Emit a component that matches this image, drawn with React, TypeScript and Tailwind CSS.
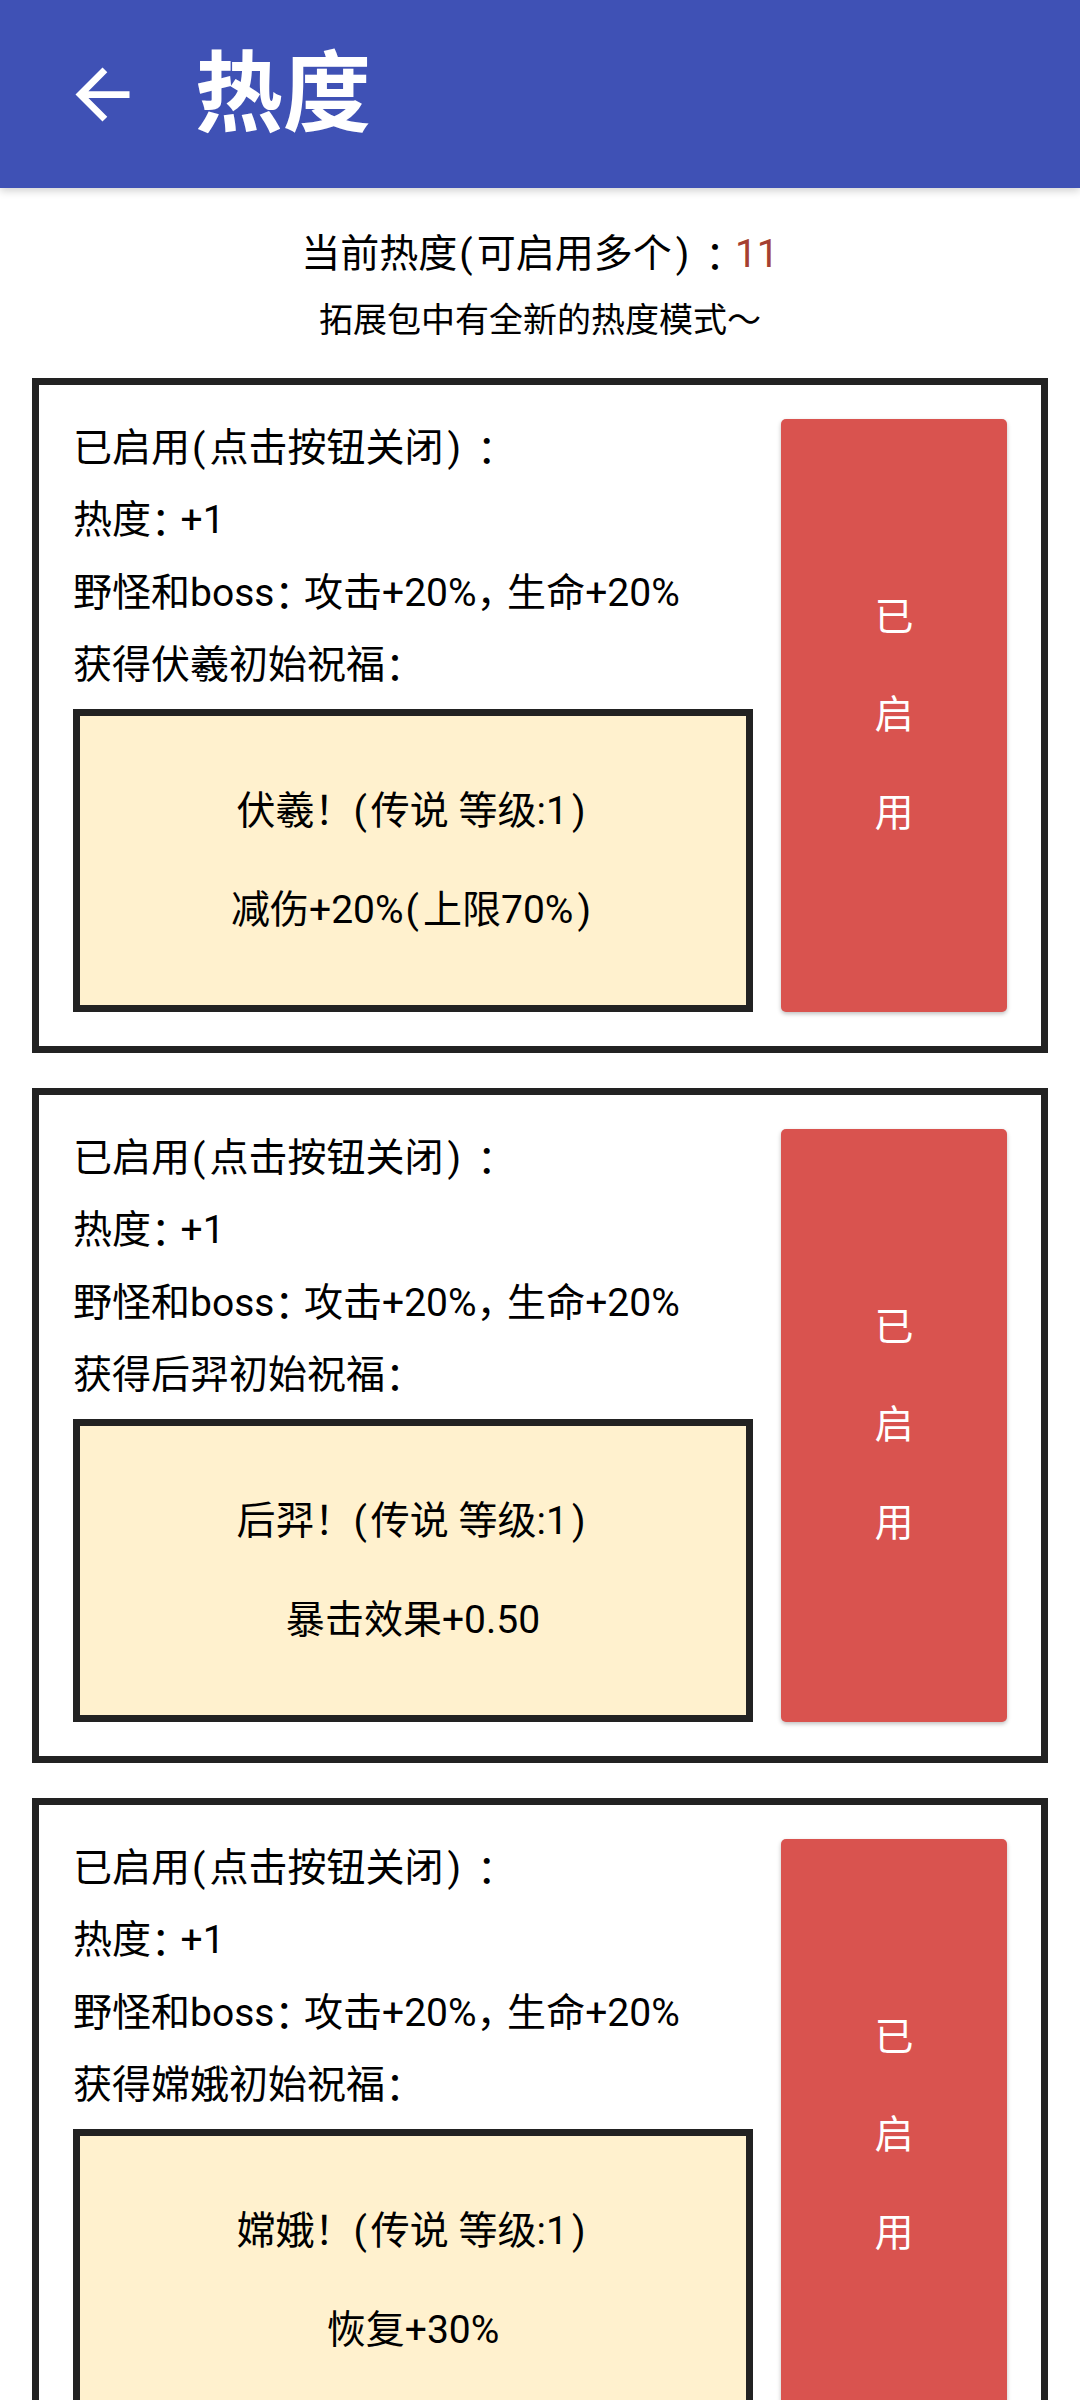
import type { ReactNode } from "react";

const font = { fontFamily: 'Roboto, "Noto Sans CJK SC", sans-serif' };

type Blessing = { name: string; effect: string };

const blessings: Blessing[] = [
  { name: "伏羲", effect: "减伤+20%(上限70%)" },
  { name: "后羿", effect: "暴击效果+0.50" },
  { name: "嫦娥", effect: "恢复+30%" },
];

// the device font spaces punctuation a bit differently, nudge it
function fmt(text: string): ReactNode[] {
  const chars = Array.from(text);
  return chars.map((ch, i) => {
    if (ch === "(") return <span key={i} className={chars[i - 1] === "！" ? "mr-[4px]" : "ml-[2px] mr-[4px]"}>(</span>;
    if (ch === ")") return <span key={i} className="mx-[4px]">)</span>;
    if (ch === "：")
      return (
        <span
          key={i}
          className={`mr-[10px] font-['Noto_Sans_CJK_JP',sans-serif] [font-feature-settings:'halt'] ${chars[i - 1] === ")" ? "ml-[12px]" : ""}`}
        >
          ：
        </span>
      );
    if (ch === "，")
      return (
        <span key={i} className="mr-[11px] [font-feature-settings:'halt']">
          ，
        </span>
      );
    return ch;
  });
}

function BackArrow() {
  return (
    <svg viewBox="0 0 24 24" className="w-[81px] h-[81px]" fill="#ffffff">
      <path d="M20 11H7.83l5.59-5.59L12 4l-8 8 8 8 1.41-1.41L7.83 13H20v-2z" />
    </svg>
  );
}

function HeatCard({ b }: { b: Blessing }) {
  return (
    <div className="border-[7px] border-[#222222] bg-white p-[34px] flex gap-[28px]">
      {/* left: description + blessing box */}
      <div className="flex-1 flex flex-col gap-[14.5px] text-[39px] text-black">
        <div className="h-[58px] flex items-center">{fmt("已启用(点击按钮关闭)：")}</div>
        <div className="h-[58px] flex items-center">{fmt("热度：+1")}</div>
        <div className="h-[58px] flex items-center">{fmt("野怪和boss：攻击+20%，生命+20%")}</div>
        <div className="h-[58px] flex items-center">{fmt(`获得${b.name}初始祝福：`)}</div>
        <div className="border-[7px] border-[#222222] bg-[#FFF1CE] py-[66px] flex flex-col items-center gap-[41px]">
          <div className="h-[58px] flex items-center">{fmt(`${b.name}！(传说 等级:1)`)}</div>
          <div className="h-[58px] flex items-center">{fmt(b.effect)}</div>
        </div>
      </div>
      {/* right: toggle button */}
      <button className="w-[226px] bg-[#D9534F] rounded-[5px] shadow-[0_2px_4px_rgba(0,0,0,0.25)] flex flex-col items-center justify-center gap-[40px] text-white text-[39px]">
        <span className="h-[58px] flex items-center">已</span>
        <span className="h-[58px] flex items-center">启</span>
        <span className="h-[58px] flex items-center">用</span>
      </button>
    </div>
  );
}

export default function App() {
  return (
    <div className="w-[1080px] min-h-[2400px] bg-white" style={font}>
      <header className="h-[188px] bg-[#3F51B5] flex items-center pl-[62px] shadow-[0_3px_8px_rgba(0,0,0,0.18)] relative z-10">
        <BackArrow />
        <h1 className="ml-[52px] text-[88px] font-bold text-white leading-none">热度</h1>
      </header>

      <div className="flex flex-col items-center pt-[37px]">
        <div className="h-[58px] flex items-center text-[39px] text-black">
          {fmt("当前热度(可启用多个)：")}
          <span className="text-[#A53F31]">11</span>
        </div>
        <div className="h-[50px] mt-[12px] flex items-center text-[34px] text-black">拓展包中有全新的热度模式～</div>
      </div>

      <div className="px-[32px] mt-[33px] flex flex-col gap-[35px]">
        {blessings.map((b) => (
          <HeatCard key={b.name} b={b} />
        ))}
      </div>
    </div>
  );
}
